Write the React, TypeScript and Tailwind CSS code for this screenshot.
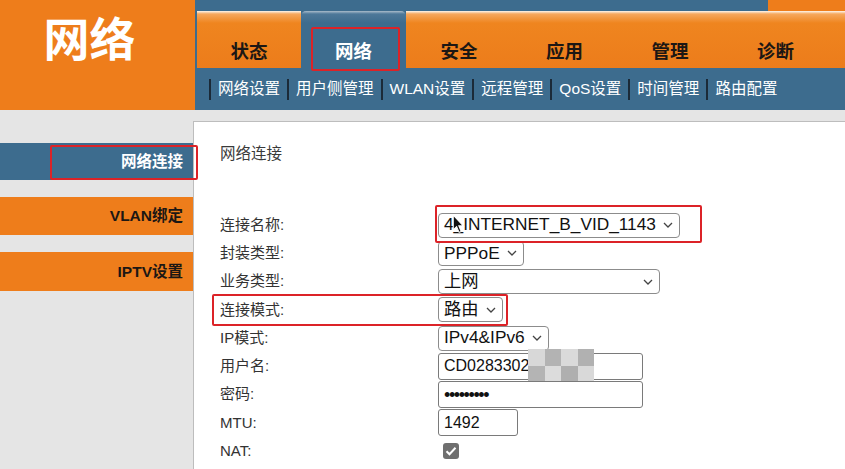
import React from 'react';

const FONT = "font-['Liberation_Sans','Noto_Sans_CJK_SC',sans-serif]";

const tabs = [
  { label: '状态', w: 'w-[104px]' },
  { label: '网络', w: 'w-[105px]', active: true },
  { label: '安全', w: 'w-[106px]' },
  { label: '应用', w: 'w-[105px]' },
  { label: '管理', w: 'w-[106px]' },
  { label: '诊断', w: 'w-[105px]' },
];

const subnav = ['网络设置', '用户侧管理', 'WLAN设置', '远程管理', 'QoS设置', '时间管理', '路由配置'];

const sideItems = [
  { label: '网络连接', active: true, h: 'h-[37px]' },
  { label: 'VLAN绑定', h: 'h-[38px]' },
  { label: 'IPTV设置', h: 'h-[39px]' },
];

function Chevron() {
  return (
    <svg width="10" height="6" viewBox="0 0 10 6" className="shrink-0">
      <polyline points="1,1 5,5 9,1" fill="none" stroke="#444" strokeWidth="1.3" />
    </svg>
  );
}

function Select({ value, className = '' }: { value: string; className?: string }) {
  return (
    <div
      className={`inline-flex items-center gap-[7px] h-[25px] pl-[5px] pr-[6px] border border-[#8c8c8c] rounded-[4px] bg-white text-[17.3px] text-[#111] leading-none ${className}`}
    >
      <span className="whitespace-nowrap">{value}</span>
      <Chevron />
    </div>
  );
}

function TextInput({ children, className = '' }: { children: React.ReactNode; className?: string }) {
  return (
    <div
      className={`flex items-center h-[27px] px-[5px] border border-[#7a7a7a] rounded-[3px] bg-white text-[#111] leading-none ${className}`}
    >
      {children}
    </div>
  );
}

function RedBox({ className }: { className: string }) {
  return <div className={`absolute z-10 border-[2.5px] border-[#dc2328] rounded-[2px] pointer-events-none ${className}`} />;
}

function Cursor() {
  return (
    <svg width="13" height="20" viewBox="0 0 12 19" className="absolute left-[14px] top-[1px] z-20">
      <path d="M1 1 L1 15 L4.2 12 L6.6 17.5 L8.6 16.6 L6.3 11.3 L10.6 11.3 Z" fill="#111" stroke="#fff" strokeWidth="1" />
    </svg>
  );
}

function Mosaic() {
  const cells = ['bg-[#d8d8d8]', 'bg-[#b3b3b3]', 'bg-[#dadada]', 'bg-[#b1b1b1]', 'bg-[#b4b4b4]', 'bg-[#dcdcdc]', 'bg-[#afafaf]', 'bg-[#d9d9d9]'];
  return (
    <div className="absolute left-[90px] top-[-4px] w-[66px] h-[34px] grid grid-cols-4 grid-rows-2">
      {cells.map((c, i) => (
        <div key={i} className={c} />
      ))}
    </div>
  );
}

function Row({ label, children, overlay }: { label: string; children: React.ReactNode; overlay?: React.ReactNode }) {
  return (
    <div className="relative flex items-center h-[28.25px]">
      <div className="w-[218px] shrink-0 text-[15px] text-[#333]">{label}</div>
      <div className="relative flex items-center">{children}</div>
      {overlay}
    </div>
  );
}

export default function App() {
  return (
    <div className={`w-[845px] h-[469px] overflow-hidden bg-[#e5e5e5] ${FONT}`}>
      {/* header */}
      <div className="flex h-[110px]">
        <div className="w-[195px] bg-[#ee7d1b] flex justify-center pt-[12px] pr-[16px]">
          <span className="text-[46px] leading-[56px] font-bold text-white">网络</span>
        </div>
        <div className="flex-1 flex flex-col">
          <div className="flex h-[11px]">
            <div className="flex-1 bg-[#3d6c8e]" />
            <div className="w-[77px] bg-[#ee7d1b]" />
          </div>
          <div className="flex h-[57px] bg-[#3d6c8e] pl-[2px]">
            {tabs.map((t) => (
              <div
                key={t.label}
                className={`relative ${t.w} flex justify-center pt-[29px] text-[18.5px] leading-[24px] font-bold ${
                  t.active
                    ? 'rounded-t-[5px] bg-[linear-gradient(to_bottom,#a9bccb_0px,#4d7899_3px,#3d6c8e_12px)] text-white'
                    : 'bg-[linear-gradient(to_bottom,#fdf6ee_0px,#f6a85e_3px,#ef851f_12px,#ec7c1b_100%)] text-[#1c1714]'
                }`}
              >
                {t.label}
                {t.active && <RedBox className="left-[10px] top-[16px] w-[89px] h-[44px]" />}
              </div>
            ))}
            <div className="flex-1 bg-[linear-gradient(to_bottom,#fdf6ee_0px,#f6a85e_3px,#ef851f_12px,#ec7c1b_100%)]" />
          </div>
          <div className="flex items-center h-[42px] bg-[#3d6c8e] pl-[14px] text-[15.5px] text-white">
            {subnav.map((s) => (
              <React.Fragment key={s}>
                <div className="w-[2px] h-[21px] bg-[#1b2a38]" />
                <span className="px-[7px] whitespace-nowrap">{s}</span>
              </React.Fragment>
            ))}
          </div>
        </div>
      </div>

      {/* body */}
      <div className="flex h-[359px]">
        <div className="w-[193px] shrink-0 flex flex-col gap-[17px] pt-[33px]">
          {sideItems.map((s) => (
            <div
              key={s.label}
              className={`relative ${s.h} flex items-center justify-end pr-[10px] text-[15.5px] font-bold ${
                s.active ? 'bg-[#3d6c8e] text-white' : 'bg-[#ee7d1b] text-[#1c1714]'
              }`}
            >
              {s.label}
              {s.active && <RedBox className="left-[50px] top-[2px] w-[148px] h-[35px]" />}
            </div>
          ))}
        </div>

        <div className="flex-1 mt-[11px] bg-white border-t border-l border-[#bdbdbd] pl-[26px] pt-[22px]">
          <div className="text-[15.5px] leading-[20px] text-[#3a3a3a]">网络连接</div>
          <div className="mt-[47px] flex flex-col">
            <Row label="连接名称:" overlay={<RedBox className="left-[215px] top-[-6px] w-[267px] h-[38px]" />}>
              <Select value="4_INTERNET_B_VID_1143" />
              <Cursor />
            </Row>
            <Row label="封装类型:">
              <Select value="PPPoE" />
            </Row>
            <Row label="业务类型:">
              <Select value="上网" className="w-[222px] justify-between" />
            </Row>
            <Row label="连接模式:" overlay={<RedBox className="left-[-8px] top-[-2px] w-[296px] h-[32px]" />}>
              <Select value="路由" />
            </Row>
            <Row label="IP模式:">
              <Select value="IPv4&IPv6" />
            </Row>
            <Row label="用户名:">
              <TextInput className="w-[205px] text-[16px]">CD0283302</TextInput>
              <Mosaic />
            </Row>
            <Row label="密码:">
              <TextInput className="w-[205px] text-[18px] tracking-[-1.4px]">•••••••••</TextInput>
            </Row>
            <Row label="MTU:">
              <TextInput className="w-[80px] text-[16px]">1492</TextInput>
            </Row>
            <Row label="NAT:">
              <div className="ml-[5px] w-[16px] h-[16px] rounded-[3px] bg-[#6f6f6f] flex items-center justify-center">
                <svg width="12" height="10" viewBox="0 0 12 10">
                  <polyline points="1.5,5.2 4.5,8.2 10.5,1.8" fill="none" stroke="#fff" strokeWidth="2" />
                </svg>
              </div>
            </Row>
          </div>
        </div>
      </div>
    </div>
  );
}
